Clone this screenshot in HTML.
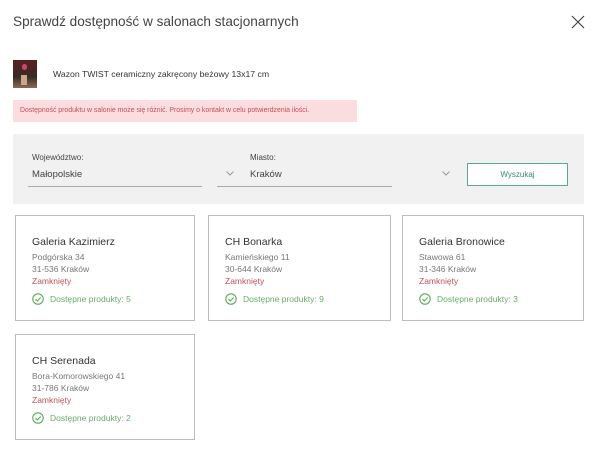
<!DOCTYPE html>
<html><head><meta charset="utf-8"><style>
body{margin:0;width:600px;height:463px;background:#fff;font-family:"Liberation Sans",sans-serif;position:relative;overflow:hidden;color:#333}
.a{position:absolute}
.title{left:13px;top:14px;font-size:13.6px;color:#444;font-weight:300}
.card{position:absolute;width:180px;height:106px;border:1px solid #bdbdbd;box-sizing:border-box}
.card .n{position:absolute;left:16px;top:20px;font-size:10.5px;color:#333}
.card .l{position:absolute;left:16px;font-size:8.5px;color:#777}
.card .z{color:#c0515a}
.card .ok{position:absolute;left:16px;top:77px;font-size:8.5px;color:#6aaa6a;display:flex;align-items:center}
.card .ok svg{margin-right:6px}
.lab{font-size:8px;color:#444}
.sel{font-size:9.5px;color:#444}
.ul{height:1px;background:#aaa}
</style></head><body>
<div class="a title">Sprawdź dostępność w salonach stacjonarnych</div>
<svg class="a" style="left:571px;top:15px" width="14" height="14" viewBox="0 0 14 14"><path d="M1 1L13 13M13 1L1 13" stroke="#444" stroke-width="1.2"/></svg>
<div class="a" style="left:13px;top:60px;width:24px;height:28px;background:linear-gradient(#5a2020,#3a2a25 60%,#8a6a55)"></div>
<div class="a" style="left:22px;top:64px;width:5px;height:6px;background:#c44a6a;border-radius:3px"></div>
<div class="a" style="left:21px;top:75px;width:6px;height:10px;background:#c8a888"></div>
<div class="a" style="left:53px;top:69px;font-size:8.7px;color:#333">Wazon TWIST ceramiczny zakręcony beżowy 13x17 cm</div>
<div class="a" style="left:13px;top:100px;width:344px;height:22px;background:#fbdde0"></div>
<div class="a" style="left:20px;top:107px;font-size:6.9px;color:#c0515a">Dostępność produktu w salonie może się różnić. Prosimy o kontakt w celu potwierdzenia ilości.</div>
<div class="a" style="left:13px;top:134px;width:571px;height:70px;background:#f1f1f1"></div>
<div class="a lab" style="left:32px;top:153px">Województwo:</div>
<div class="a sel" style="left:32px;top:169px">Małopolskie</div>
<svg class="a" style="left:226px;top:171px" width="8" height="5"><path d="M0.5 0.5L4 4L7.5 0.5" stroke="#999" fill="none"/></svg>
<div class="a ul" style="left:28px;top:186px;width:174px"></div>
<div class="a lab" style="left:250px;top:153px">Miasto:</div>
<div class="a sel" style="left:250px;top:169px">Kraków</div>
<svg class="a" style="left:442px;top:171px" width="8" height="5"><path d="M0.5 0.5L4 4L7.5 0.5" stroke="#999" fill="none"/></svg>
<div class="a ul" style="left:217px;top:186px;width:175px"></div>
<div class="a" style="left:467px;top:163px;width:101px;height:23px;border:1px solid #5aa898;box-sizing:border-box;background:#fff;font-size:8px;color:#3a8a78;text-align:center;line-height:21px">Wyszukaj</div>

<div class="card" style="left:15px;top:215px"><div class="n">Galeria Kazimierz</div><div class="l" style="top:36px">Podgórska 34</div><div class="l" style="top:48px">31-536 Kraków</div><div class="l z" style="top:60px">Zamknięty</div><div class="ok"><svg width="12" height="12"><circle cx="6" cy="6" r="5.2" fill="none" stroke="#5aaa5a" stroke-width="1.1"/><path d="M3.5 6.2L5.3 8L8.7 4.5" fill="none" stroke="#5aaa5a" stroke-width="1.1"/></svg>Dostępne produkty: 5</div></div>
<div class="card" style="left:208px;top:215px;width:183px"><div class="n">CH Bonarka</div><div class="l" style="top:36px">Kamieńskiego 11</div><div class="l" style="top:48px">30-644 Kraków</div><div class="l z" style="top:60px">Zamknięty</div><div class="ok"><svg width="12" height="12"><circle cx="6" cy="6" r="5.2" fill="none" stroke="#5aaa5a" stroke-width="1.1"/><path d="M3.5 6.2L5.3 8L8.7 4.5" fill="none" stroke="#5aaa5a" stroke-width="1.1"/></svg>Dostępne produkty: 9</div></div>
<div class="card" style="left:402px;top:215px;width:182px"><div class="n">Galeria Bronowice</div><div class="l" style="top:36px">Stawowa 61</div><div class="l" style="top:48px">31-346 Kraków</div><div class="l z" style="top:60px">Zamknięty</div><div class="ok"><svg width="12" height="12"><circle cx="6" cy="6" r="5.2" fill="none" stroke="#5aaa5a" stroke-width="1.1"/><path d="M3.5 6.2L5.3 8L8.7 4.5" fill="none" stroke="#5aaa5a" stroke-width="1.1"/></svg>Dostępne produkty: 3</div></div>
<div class="card" style="left:15px;top:334px"><div class="n">CH Serenada</div><div class="l" style="top:36px">Bora-Komorowskiego 41</div><div class="l" style="top:48px">31-786 Kraków</div><div class="l z" style="top:60px">Zamknięty</div><div class="ok"><svg width="12" height="12"><circle cx="6" cy="6" r="5.2" fill="none" stroke="#5aaa5a" stroke-width="1.1"/><path d="M3.5 6.2L5.3 8L8.7 4.5" fill="none" stroke="#5aaa5a" stroke-width="1.1"/></svg>Dostępne produkty: 2</div></div>
</body></html>
